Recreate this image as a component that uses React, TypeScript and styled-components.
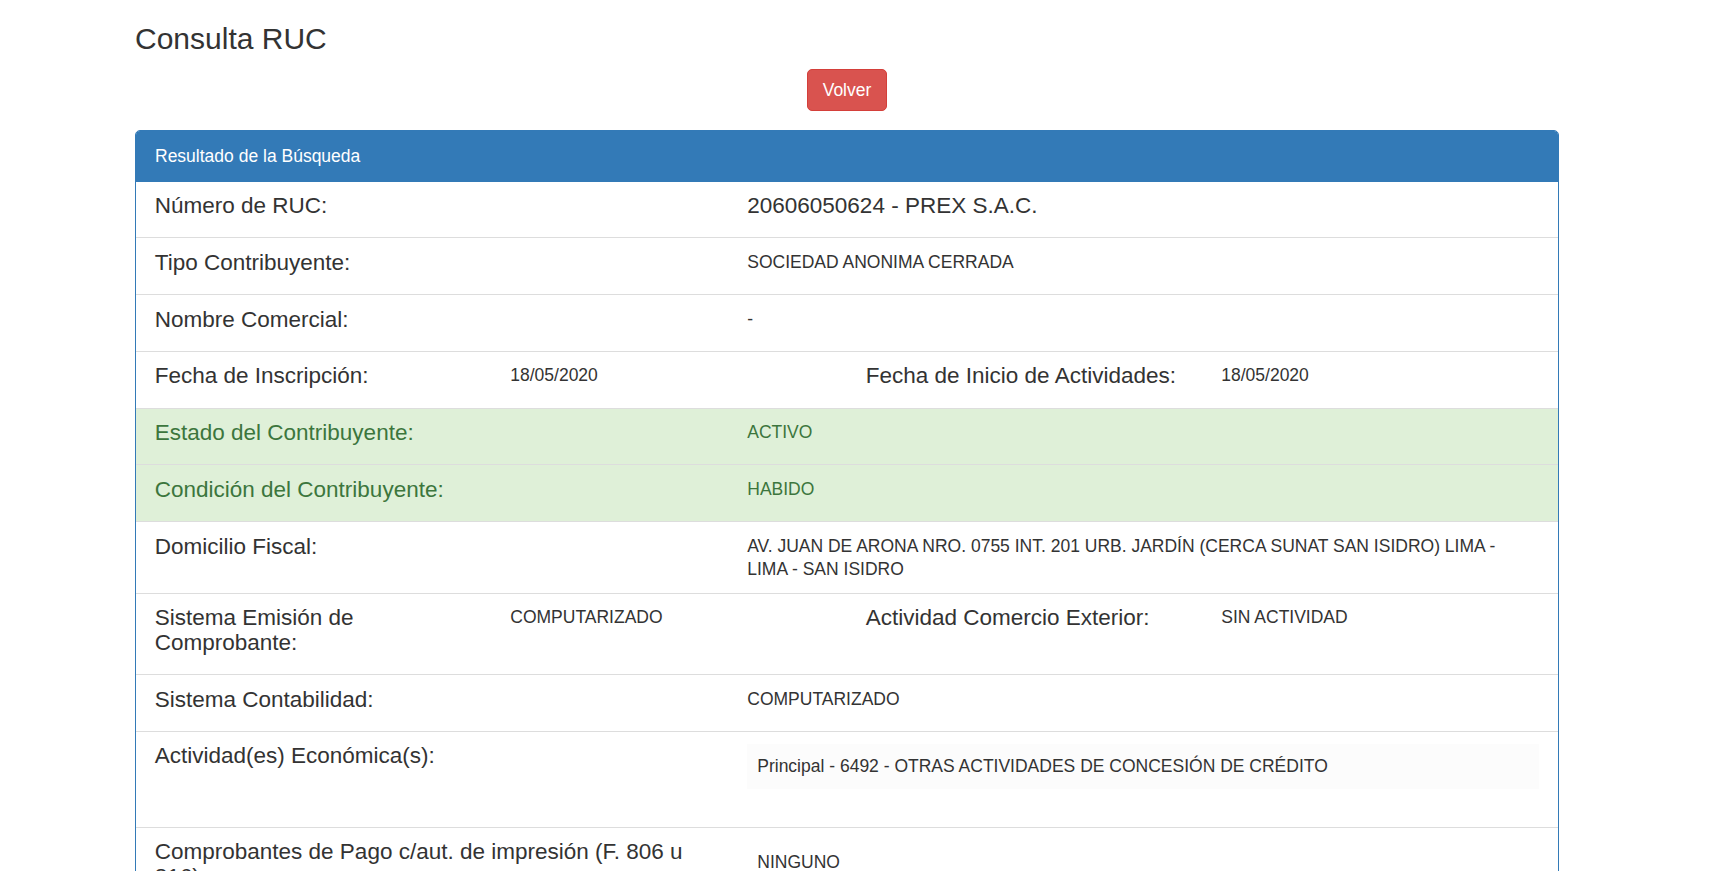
import React from "react";
import styled, { createGlobalStyle, css } from "styled-components";

const GlobalStyle = createGlobalStyle`
  html, body {
    margin: 0;
    padding: 0;
    background: #ffffff;
  }
  body {
    font-family: "Liberation Sans", Arial, Helvetica, sans-serif;
    font-size: 17.5px;
    line-height: 1.42857;
    color: #333333;
  }
  * { box-sizing: border-box; }
`;

const Container = styled.div`
  width: 1424px;
  margin-left: 135px;
  padding-bottom: 40px;
`;

const Title = styled.h3`
  font-size: 30px;
  font-weight: 500;
  line-height: 33px;
  margin: 22px 0 14px;
  color: #333333;
`;

const Actions = styled.div`
  display: flex;
  justify-content: center;
  margin-bottom: 19px;
`;

const DangerButton = styled.button`
  height: 42px;
  padding: 0 15px;
  font-family: inherit;
  font-size: 17.5px;
  line-height: 25px;
  color: #ffffff;
  background: #d9534f;
  border: 1px solid #d43f3a;
  border-radius: 5px;
  cursor: pointer;
`;

const Panel = styled.div`
  border: 1px solid #337ab7;
  border-radius: 5px;
  background: #ffffff;
  overflow: hidden;
`;

const PanelHeading = styled.div`
  background: #337ab7;
  color: #ffffff;
  font-size: 17.5px;
  line-height: 25px;
  padding: 12.5px 19px 13px;
`;

const Item = styled.div<{ $success?: boolean }>`
  padding: 12.5px 18.75px 12.3px;
  border-top: 1px solid #dddddd;
  &:first-child {
    border-top: none;
  }
  ${(p) =>
    p.$success &&
    css`
      background: #dff0d8;
      color: #3c763d;
    `}
`;

const Row = styled.div`
  display: grid;
  grid-template-columns: repeat(12, minmax(0, 1fr));
  margin: 0 -18.75px;
`;

const Col = styled.div<{ $span: number }>`
  grid-column: span ${(p) => p.$span};
  padding: 0 18.75px;
`;

const Heading = styled.h4`
  font-size: 22.5px;
  font-weight: 500;
  line-height: 24.75px;
  margin: 0 0 6.25px;
`;

const Text = styled.p`
  font-size: 17.5px;
  line-height: 1.3;
  margin: 0;
`;

const Table = styled.table`
  width: 100%;
  border-collapse: collapse;
  margin-bottom: 25px;
`;

const Cell = styled.td<{ $striped?: boolean }>`
  padding: 10px;
  font-size: 17.5px;
  line-height: 25px;
  background: ${(p) => (p.$striped ? "#fcfcfc" : "transparent")};
`;

type Pair = { label: string; value: React.ReactNode; big?: boolean };

const SimpleRow: React.FC<Pair & { success?: boolean }> = ({ label, value, big, success }) => (
  <Item $success={success}>
    <Row>
      <Col $span={5}>
        <Heading>{label}</Heading>
      </Col>
      <Col $span={7}>{big ? <Heading>{value}</Heading> : <Text>{value}</Text>}</Col>
    </Row>
  </Item>
);

const DoubleRow: React.FC<{ a: Pair; b: Pair }> = ({ a, b }) => (
  <Item>
    <Row>
      <Col $span={3}>
        <Heading>{a.label}</Heading>
      </Col>
      <Col $span={3}>
        <Text>{a.value}</Text>
      </Col>
      <Col $span={3}>
        <Heading>{b.label}</Heading>
      </Col>
      <Col $span={3}>
        <Text>{b.value}</Text>
      </Col>
    </Row>
  </Item>
);

const TableRow: React.FC<{ label: string; values: string[]; striped?: boolean }> = ({
  label,
  values,
  striped,
}) => (
  <Item>
    <Row>
      <Col $span={5}>
        <Heading>{label}</Heading>
      </Col>
      <Col $span={7}>
        <Table>
          <tbody>
            {values.map((v, i) => (
              <tr key={i}>
                <Cell $striped={striped && i % 2 === 0}>{v}</Cell>
              </tr>
            ))}
          </tbody>
        </Table>
      </Col>
    </Row>
  </Item>
);

export default function App() {
  return (
    <>
      <GlobalStyle />
      <Container>
        <Title>Consulta RUC</Title>
        <Actions>
          <DangerButton type="button">Volver</DangerButton>
        </Actions>
        <Panel>
          <PanelHeading>Resultado de la Búsqueda</PanelHeading>
          <div>
            <SimpleRow label="Número de RUC:" value="20606050624 - PREX S.A.C." big />
            <SimpleRow label="Tipo Contribuyente:" value="SOCIEDAD ANONIMA CERRADA" />
            <SimpleRow label="Nombre Comercial:" value="-" />
            <DoubleRow
              a={{ label: "Fecha de Inscripción:", value: "18/05/2020" }}
              b={{ label: "Fecha de Inicio de Actividades:", value: "18/05/2020" }}
            />
            <SimpleRow label="Estado del Contribuyente:" value="ACTIVO" success />
            <SimpleRow label="Condición del Contribuyente:" value="HABIDO" success />
            <SimpleRow
              label="Domicilio Fiscal:"
              value={
                <>
                  AV. JUAN DE ARONA NRO. 0755 INT. 201 URB. JARDÍN (CERCA SUNAT SAN ISIDRO) LIMA -
                  <br />
                  LIMA - SAN ISIDRO
                </>
              }
            />
            <DoubleRow
              a={{ label: "Sistema Emisión de Comprobante:", value: "COMPUTARIZADO" }}
              b={{ label: "Actividad Comercio Exterior:", value: "SIN ACTIVIDAD" }}
            />
            <SimpleRow label="Sistema Contabilidad:" value="COMPUTARIZADO" />
            <TableRow
              label="Actividad(es) Económica(s):"
              values={["Principal - 6492 - OTRAS ACTIVIDADES DE CONCESIÓN DE CRÉDITO"]}
              striped
            />
            <TableRow
              label="Comprobantes de Pago c/aut. de impresión (F. 806 u 816):"
              values={["NINGUNO"]}
            />
            <TableRow
              label="Sistema de Emisión Electrónica:"
              values={["FACTURA PORTAL DESDE 13/07/2020", "BOLETA PORTAL DESDE 13/07/2020"]}
              striped
            />
            <SimpleRow label="Emisor electrónico desde:" value="13/07/2020" />
            <SimpleRow label="Comprobantes Electrónicos:" value="FACTURA (desde 13/07/2020),BOLETA (desde 13/07/2020)" />
            <SimpleRow label="Afiliado al PLE desde:" value="-" />
            <TableRow label="Padrones:" values={["NINGUNO"]} />
          </div>
        </Panel>
      </Container>
    </>
  );
}
